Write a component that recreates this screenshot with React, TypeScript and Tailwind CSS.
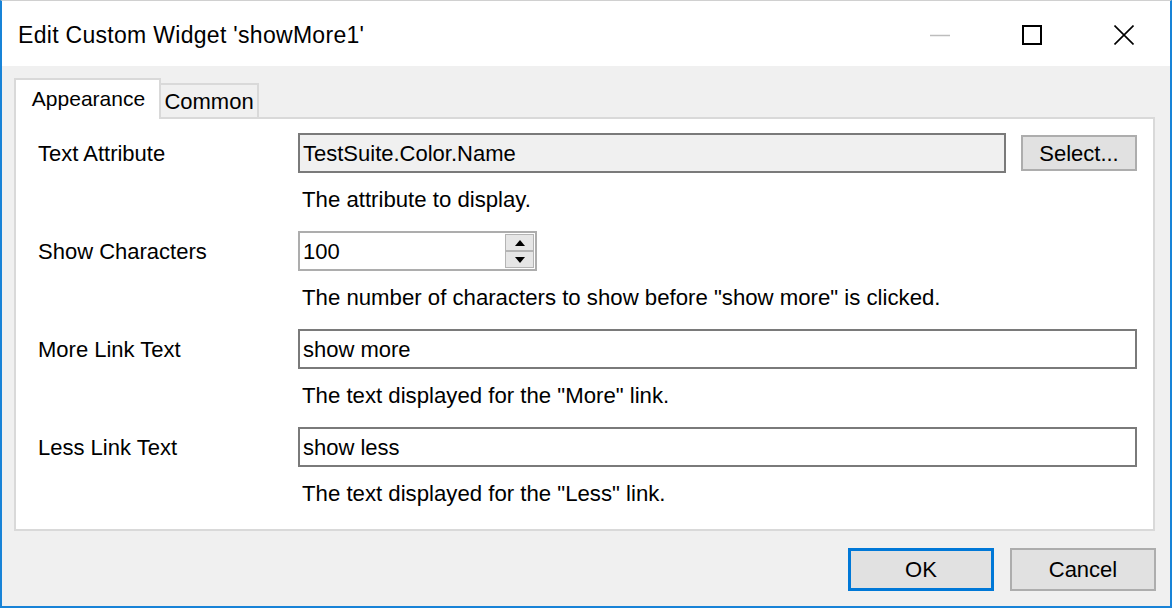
const LABEL_W = "w-[260px]";

function TitleBar() {
  return (
    <div className="flex h-[65px] items-center bg-white">
      <div className="flex-1 pl-[16px] pt-[3px] text-[23px] tracking-[0.3px]">Edit Custom Widget 'showMore1'</div>
      <div className="flex h-full">
        <div className="flex w-[92px] items-center justify-center pt-[3px]">
          <svg width="20" height="20" viewBox="0 0 20 20">
            <line x1="0" y1="10.5" x2="20" y2="10.5" stroke="#bdbdbd" strokeWidth="1.5" />
          </svg>
        </div>
        <div className="flex w-[92px] items-center justify-center pt-[2px]">
          <svg width="20" height="20" viewBox="0 0 20 20">
            <rect x="1" y="1" width="18" height="18" fill="none" stroke="#000" strokeWidth="2" />
          </svg>
        </div>
        <div className="flex w-[92px] items-center justify-center pt-[2px]">
          <svg width="20" height="20" viewBox="0 0 20 20">
            <path d="M0.5 0.5 L19.5 19.5 M19.5 0.5 L0.5 19.5" stroke="#000" strokeWidth="1.6" />
          </svg>
        </div>
      </div>
    </div>
  );
}

function Row({
  label,
  desc,
  children,
}: {
  label: string;
  desc: string;
  children: React.ReactNode;
}) {
  return (
    <div className="flex">
      <div className={`${LABEL_W} flex h-[40px] items-center`}>{label}</div>
      <div className="flex-1">
        {children}
        <div className="mt-[14px] h-[26px] pl-[4px] text-[22.2px] leading-[26px]">{desc}</div>
      </div>
    </div>
  );
}

function TextBox({ value, disabled }: { value: string; disabled?: boolean }) {
  return (
    <div
      className={`flex h-[40px] flex-1 items-center border-2 border-[#7a7a7a] pl-[3px] ${
        disabled ? "bg-[#f0f0f0]" : "bg-white"
      }`}
    >
      {value}
    </div>
  );
}

function Spinner() {
  return (
    <div className="my-[1px] mr-[1px] flex w-[29px] flex-col border border-[#b4b4b4] bg-[#e6e6e6]">
      <div className="flex flex-1 items-center justify-center border-b-2 border-[#b4b4b4]">
        <svg width="10" height="6" viewBox="0 0 10 6">
          <path d="M0 6 L5 0 L10 6 Z" fill="#000" />
        </svg>
      </div>
      <div className="flex flex-1 items-center justify-center">
        <svg width="10" height="6" viewBox="0 0 10 6">
          <path d="M0 0 L10 0 L5 6 Z" fill="#000" />
        </svg>
      </div>
    </div>
  );
}

function Button({ children, primary }: { children: React.ReactNode; primary?: boolean }) {
  return (
    <div
      className={`flex h-[43px] w-[146px] items-center justify-center bg-[#e1e1e1] ${
        primary ? "border-[3px] border-[#0078d7]" : "border-2 border-[#adadad]"
      }`}
    >
      {children}
    </div>
  );
}

export default function App() {
  return (
    <div className="h-[608px] w-[1174px] bg-white font-['Liberation_Sans',Arial,sans-serif] text-[22px] text-black">
      <div className="flex h-[608px] w-[1172px] flex-col border-x-2 border-b-2 border-t border-[#1883d7] border-t-[#d0d0d0]">
        <TitleBar />
        <div className="flex flex-1 flex-col bg-[#f0f0f0] pl-[12px] pr-[14px]">
          <div className="mt-[12px] flex h-[39px] items-end">
            <div className="relative z-10 -mb-[2px] flex h-[41px] w-[147px] items-center justify-center border-2 border-b-0 border-[#d9d9d9] bg-white pb-[2px] pl-[2px] text-[21px]">
              Appearance
            </div>
            <div className="flex h-[34px] w-[98px] items-center justify-center border-2 border-b-0 border-l-0 border-[#d9d9d9]">
              Common
            </div>
          </div>
          <div className="flex h-[414px] w-[1141px] flex-col gap-[18px] border-2 border-[#d9d9d9] bg-white pl-[22px] pr-[16px] pt-[14px]">
            <Row label="Text Attribute" desc="The attribute to display.">
              <div className="flex items-center">
                <TextBox value="TestSuite.Color.Name" disabled />
                <div className="ml-[15px] flex h-[36px] w-[116px] items-center justify-center border-2 border-[#adadad] bg-[#e1e1e1]">
                  Select...
                </div>
              </div>
            </Row>
            <Row
              label="Show Characters"
              desc={'The number of characters to show before "show more" is clicked.'}
            >
              <div className="flex h-[40px] w-[239px] border-2 border-[#adadad] bg-white">
                <div className="flex flex-1 items-center pl-[3px]">100</div>
                <Spinner />
              </div>
            </Row>
            <Row label="More Link Text" desc={'The text displayed for the "More" link.'}>
              <div className="flex">
                <TextBox value="show more" />
              </div>
            </Row>
            <Row label="Less Link Text" desc={'The text displayed for the "Less" link.'}>
              <div className="flex">
                <TextBox value="show less" />
              </div>
            </Row>
          </div>
          <div className="mt-[17px] flex justify-end gap-[16px]">
            <Button primary>OK</Button>
            <Button>Cancel</Button>
          </div>
        </div>
      </div>
    </div>
  );
}
